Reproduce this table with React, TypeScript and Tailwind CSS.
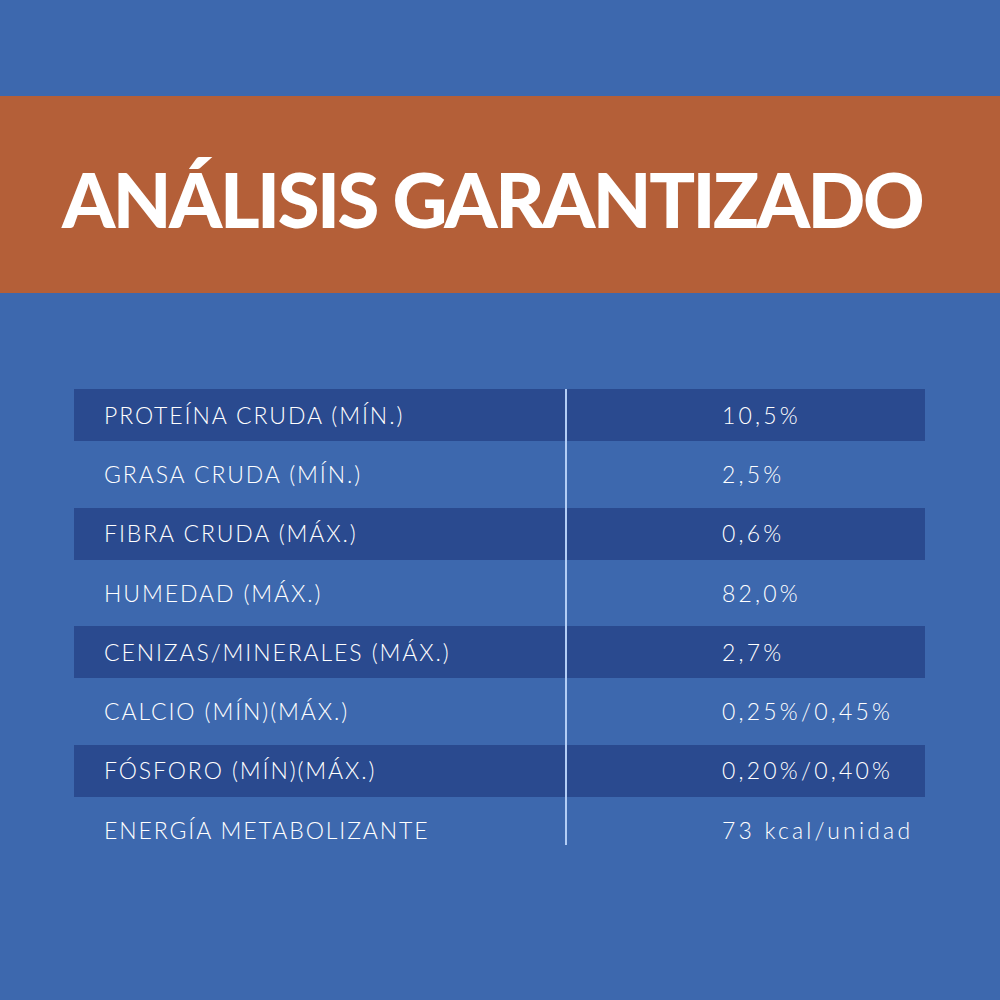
import React from "react";

const rows: [string, string][] = [
  ["PROTEÍNA CRUDA (MÍN.)", "10,5%"],
  ["GRASA CRUDA (MÍN.)", "2,5%"],
  ["FIBRA CRUDA (MÁX.)", "0,6%"],
  ["HUMEDAD (MÁX.)", "82,0%"],
  ["CENIZAS/MINERALES (MÁX.)", "2,7%"],
  ["CALCIO (MÍN)(MÁX.)", "0,25%/0,45%"],
  ["FÓSFORO (MÍN)(MÁX.)", "0,20%/0,40%"],
  ["ENERGÍA METABOLIZANTE", "73 kcal/unidad"],
];

export default function App() {
  return (
    <div className="w-[1000px] h-[1000px] bg-[#3d68ae] flex flex-col" style={{ fontFamily: "Lato, 'Noto Sans', sans-serif" }}>
      <div className="h-[96px]" />
      <div className="h-[197px] bg-[#b45f38] flex items-center justify-center">
        <h1 className="text-white text-[76px] font-black tracking-[-2.5px] leading-none pt-[8px] mr-[16px]" style={{ fontFamily: "Lato, sans-serif" }}>
          ANÁLISIS GARANTIZADO
        </h1>
      </div>
      <div className="pt-[96px] px-[74px]">
        <div className="relative w-[851px]">
          <div className="absolute left-[491px] top-0 w-[2px] h-[456px] bg-[#b3cdf5]" />
          {rows.map(([k, v], i) => {
            const dark = i % 2 === 0;
            return (
              <div
                key={k}
                className={`flex items-center text-white text-[23px] font-light ${dark ? "h-[52px] bg-[#2a4a8f]" : "h-[66.5px]"}`}
              >
                <div className="w-[492px] pl-[30px] tracking-[1.9px]">{k}</div>
                <div className="pl-[156px] tracking-[3.2px]">{v}</div>
              </div>
            );
          })}
        </div>
      </div>
    </div>
  );
}
